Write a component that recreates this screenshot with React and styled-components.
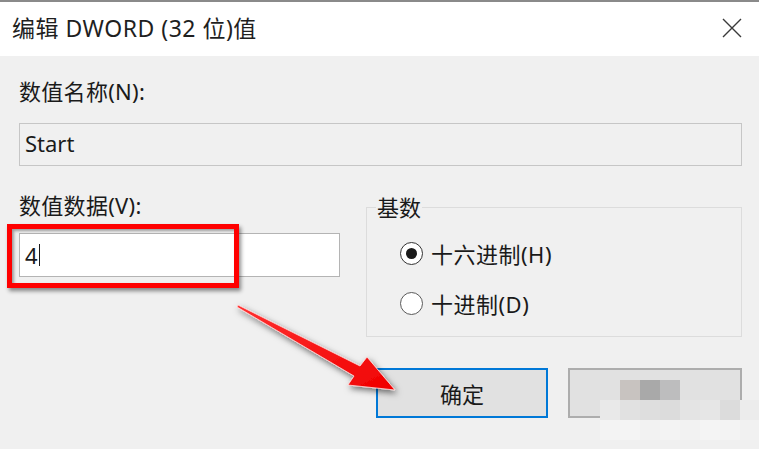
import React from "react";
import styled, { createGlobalStyle } from "styled-components";

const GlobalStyle = createGlobalStyle`
  html, body {
    margin: 0;
    padding: 0;
    background: #f0f0f0;
  }
  * {
    box-sizing: border-box;
  }
`;

const FONT = `"Segoe UI", "Noto Sans", "Noto Sans CJK SC", sans-serif`;

const mosaicRows = [
  ["transparent", "#c8c3c0", "#a9a9a9", "#bdbdbe", "transparent", "transparent", "transparent", "transparent"],
  ["#e9e9e9", "#e1e1e1", "#dedede", "#dcdcdc", "#e4e4e4", "#e6e6e6", "#dcdcdc", "#ececec"],
  ["#f3f3f3", "#f4f4f4", "#f2f2f2", "#f3f3f3", "#f2f2f2", "#f4f4f4", "#f3f3f3", "#f1f1f1"],
];

function App() {
  return (
    <>
      <GlobalStyle />
      <Window>
        <TopEdge />
        <TitleBar>
          <Title>编辑 DWORD (32 位)值</Title>
          <CloseButton>
            <svg width="20" height="20" viewBox="0 0 20 20">
              <path d="M1 1 L19 19 M19 1 L1 19" stroke="#3a3a3a" strokeWidth="1.4" fill="none" />
            </svg>
          </CloseButton>
        </TitleBar>
        <Body>
          <Label $top={23}>数值名称(N):</Label>
          <NameField>Start</NameField>
          <Row>
            <LeftCol>
              <Label $top={0}>数值数据(V):</Label>
              <ValueField>
                4<Caret />
              </ValueField>
              <Highlight />
            </LeftCol>
            <GroupBox>
              <Legend>基数</Legend>
              <RadioRow $top={12}>
                <Radio $checked />
                <span>十六进制(H)</span>
              </RadioRow>
              <RadioRow $top={10}>
                <Radio />
                <span>十进制(D)</span>
              </RadioRow>
            </GroupBox>
          </Row>
          <Buttons>
            <Button $primary $w={172}>确定</Button>
            <Button $w={174}>取消</Button>
          </Buttons>
        </Body>

        <Arrow width="759" height="449" viewBox="0 0 759 449">
          <defs>
            <filter id="sh" x="-20%" y="-20%" width="140%" height="140%">
              <feDropShadow dx="2" dy="3" stdDeviation="3" floodColor="#000" floodOpacity="0.55" />
            </filter>
            <linearGradient id="rg" x1="0" y1="0" x2="1" y2="1">
              <stop offset="0" stopColor="#ff3030" />
              <stop offset="1" stopColor="#f00000" />
            </linearGradient>
          </defs>
          <polygon
            points="238,305 360,366 367,357 395,390 348,385 354,376 237,307"
            fill="url(#rg)"
            stroke="#ffdede"
            strokeWidth="0.8"
            filter="url(#sh)"
          />
        </Arrow>

        <Mosaic>
          {mosaicRows.map((row, i) =>
            row.map((c, j) => <Block key={i + "-" + j} $c={c} />)
          )}
        </Mosaic>
      </Window>
    </>
  );
}

const Window = styled.div`
  position: relative;
  width: 759px;
  height: 449px;
  overflow: hidden;
  display: flex;
  flex-direction: column;
  background: #f0f0f0;
  font-family: ${FONT};
  color: #1a1a1a;
`;

const TopEdge = styled.div`
  height: 2px;
  background: #8a8a8a;
`;

const TitleBar = styled.div`
  height: 54px;
  background: #ffffff;
  display: flex;
  align-items: center;
  justify-content: space-between;
  padding: 0 17px 0 12px;
`;

const Title = styled.div`
  margin-top: -3px;
  font-size: 23px;
  line-height: 30px;
  letter-spacing: 0.5px;
  color: #1f1f1f;
`;

const CloseButton = styled.div`
  width: 20px;
  height: 20px;
  display: flex;
  margin-top: -2px;
`;

const Body = styled.div`
  flex: 1;
  display: flex;
  flex-direction: column;
  padding: 0 17px 0 19px;
`;

const Label = styled.div`
  margin-top: ${(p) => p.$top}px;
  font-size: 22px;
  line-height: 24px;
  letter-spacing: 0.3px;
  color: #1a1a1a;
`;

const NameField = styled.div`
  margin-top: 20px;
  height: 43px;
  border: 1px solid #c6c6c6;
  background: #f0f0f0;
  padding: 0 0 4px 5px;
  display: flex;
  align-items: center;
  font-size: 22px;
  color: #1a1a1a;
`;

const Row = styled.div`
  margin-top: 27px;
  display: grid;
  grid-template-columns: 321px 1fr;
  column-gap: 26px;
  align-items: start;
`;

const LeftCol = styled.div`
  position: relative;
  display: flex;
  flex-direction: column;
`;

const ValueField = styled.div`
  margin-top: 16px;
  height: 44px;
  border: 1px solid #b4b4b4;
  background: #ffffff;
  padding-left: 5px;
  display: flex;
  align-items: center;
  font-size: 22px;
  color: #1a1a1a;
`;

const Caret = styled.span`
  display: inline-block;
  width: 1px;
  height: 22px;
  margin-left: 1px;
  background: #1a1a1a;
`;

const Highlight = styled.div`
  position: absolute;
  left: -12px;
  top: 31px;
  width: 232px;
  height: 64px;
  border: 5px solid #ff0000;
  box-shadow: 2px 3px 4px rgba(0, 0, 0, 0.45), inset 2px 2px 3px rgba(0, 0, 0, 0.35);
`;

const GroupBox = styled.fieldset`
  margin: 0;
  padding: 0 0 13px 33px;
  min-width: 0;
  height: 144px;
  border: 1px solid #dcdcdc;
  display: flex;
  flex-direction: column;
`;

const Legend = styled.legend`
  margin-left: -24px;
  padding: 0 1px;
  font-size: 22px;
  line-height: 28px;
  color: #1a1a1a;
`;

const RadioRow = styled.div`
  margin-top: ${(p) => p.$top}px;
  height: 40px;
  display: flex;
  align-items: center;
  gap: 8px;
  font-size: 22px;
  letter-spacing: 0.5px;
  color: #1a1a1a;
`;

const Radio = styled.span`
  position: relative;
  flex: none;
  width: 23px;
  height: 23px;
  border-radius: 50%;
  border: 1.5px solid ${(p) => (p.$checked ? "#333" : "#5a5a5a")};
  background: #ffffff;
  &::after {
    content: "";
    display: ${(p) => (p.$checked ? "block" : "none")};
    position: absolute;
    left: 50%;
    top: 50%;
    width: 11px;
    height: 11px;
    margin: -5.5px 0 0 -5.5px;
    border-radius: 50%;
    background: #1a1a1a;
  }
`;

const Buttons = styled.div`
  margin-top: 31px;
  display: flex;
  justify-content: flex-end;
  gap: 20px;
`;

const Button = styled.div`
  width: ${(p) => p.$w}px;
  height: 50px;
  border: 2px solid ${(p) => (p.$primary ? "#0078d7" : "#adadad")};
  background: #e1e1e1;
  display: flex;
  align-items: center;
  justify-content: center;
  font-size: 22px;
  color: #1a1a1a;
`;

const Arrow = styled.svg`
  position: absolute;
  left: 0;
  top: 0;
  pointer-events: none;
`;

const Mosaic = styled.div`
  position: absolute;
  left: 600px;
  top: 380px;
  display: grid;
  grid-template-columns: repeat(8, 20px);
  grid-auto-rows: 20px;
  pointer-events: none;
`;

const Block = styled.div`
  background: ${(p) => p.$c};
`;

export default App;
